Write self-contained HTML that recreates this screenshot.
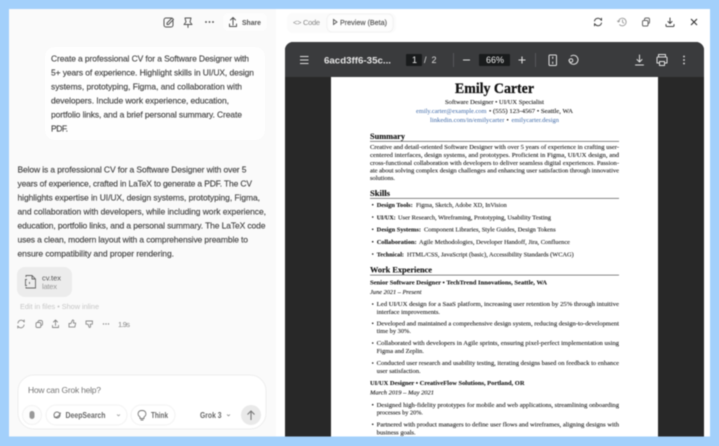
<!DOCTYPE html>
<html><head><meta charset="utf-8"><style>
html,body{margin:0;padding:0;width:719px;height:446px;overflow:hidden;background:#a3d0fb}
svg{display:block;filter:blur(.4px)}
.s{font-family:"Liberation Sans",sans-serif}
.d{font-family:"Liberation Serif",serif;fill:#1c1c1c;font-size:6.400px;stroke:#1c1c1c;stroke-width:.1}
.b{font-weight:bold}
.h{font-family:"Liberation Serif",serif;font-weight:bold;font-size:8.800px;fill:#111;stroke:#111;stroke-width:.12}
.u{font-family:"Liberation Sans",sans-serif;font-size:8.500px;fill:#444;stroke:#444;stroke-width:.14}
.i{fill:none;stroke:#555;stroke-width:1;stroke-linecap:round;stroke-linejoin:round}
.w{fill:none;stroke:#e0e0e0;stroke-width:1;stroke-linecap:round;stroke-linejoin:round}
.g{fill:none;stroke:#999;stroke-width:.9;stroke-linecap:round;stroke-linejoin:round}
</style></head><body>
<svg width="719" height="446" viewBox="0 0 719 446" xmlns="http://www.w3.org/2000/svg">
<rect width="719" height="446" fill="#a3d0fb"/>
<rect x="9" y="9" width="701" height="427.500" fill="#fff"/>
<rect x="9" y="9" width="267" height="427.500" fill="#fafafa"/>
<!-- top left icons -->
<g class="i"><path d="M171 18h-5a2 2 0 0 0-2 2v5a2 2 0 0 0 2 2h5a2 2 0 0 0 2-2v-4"/><path d="M167 23l5-5 1.500 1.500-5 5h-1.500z"/></g>
<g class="i"><path d="M185 18h6l-1 4 2 2.500h-8l2-2.500zM188 24.500v3"/></g>
<circle cx="206" cy="22" r=".9" fill="#444"/><circle cx="209.500" cy="22" r=".9" fill="#444"/><circle cx="213" cy="22" r=".9" fill="#444"/>
<rect x="223" y="13" width="44" height="18" rx="6" fill="#fdfdfd"/>
<g class="i"><path d="M233 25v-7M230.500 20l2.500-2.500 2.500 2.500M229.500 24v2.500h7V24"/></g>
<text x="242" y="25" class="s b" font-size="7.500" fill="#555" textLength="19" lengthAdjust="spacingAndGlyphs">Share</text>
<!-- user bubble -->
<rect x="45" y="47" width="220" height="93" rx="10" fill="#fefefe"/>
<text class="u" x="51" y="61.500" textLength="198">Create a professional CV for a Software Designer with</text>
<text class="u" x="51" y="75.500" textLength="203">5+ years of experience. Highlight skills in UI/UX, design</text>
<text class="u" x="51" y="89.500" textLength="191">systems, prototyping, Figma, and collaboration with</text>
<text class="u" x="51" y="103.500" textLength="178">developers. Include work experience, education,</text>
<text class="u" x="51" y="117.500" textLength="191">portfolio links, and a brief personal summary. Create</text>
<text class="u" x="51" y="131.500" textLength="17">PDF.</text>
<!-- response -->
<text class="u" x="17.500" y="172.500" textLength="229">Below is a professional CV for a Software Designer with over 5</text>
<text class="u" x="17.500" y="186.500" textLength="234.500">years of experience, crafted in LaTeX to generate a PDF. The CV</text>
<text class="u" x="17.500" y="200.500" textLength="242.500">highlights expertise in UI/UX, design systems, prototyping, Figma,</text>
<text class="u" x="17.500" y="214.500" textLength="248.500">and collaboration with developers, while including work experience,</text>
<text class="u" x="17.500" y="228.500" textLength="248">education, portfolio links, and a personal summary. The LaTeX code</text>
<text class="u" x="17.500" y="242.500" textLength="230.500">uses a clean, modern layout with a comprehensive preamble to</text>
<text class="u" x="17.500" y="256.500" textLength="156.500">ensure compatibility and proper rendering.</text>
<!-- chip -->
<rect x="17" y="267" width="55" height="30" rx="8" fill="#ececec"/>
<path d="M26 277v-1.500h6l3.500 3.500v9h-9.500v-1M32 275.500v3.500h3.500" fill="none" stroke="#666" stroke-width=".9"/>
<path d="M27 279.500h-1.500v6H27M29.500 282v2" fill="none" stroke="#666" stroke-width=".9"/>
<text x="42" y="280.500" class="s" font-size="7.500" fill="#555" textLength="19">cv.tex</text>
<text x="42" y="289" class="s" font-size="7.500" fill="#999" textLength="15">latex</text>
<text x="20" y="309" class="s" font-size="7.300" fill="#c6c6c6" textLength="79">Edit in files • Show inline</text>
<!-- action row -->
<g class="g" style="stroke:#888">
<path d="M18 323a3.200 3.200 0 0 1 5.500-1.800l.7 .8v-2M24 325a3.200 3.200 0 0 1-5.500 1.800l-.7-.8v2"/>
<rect x="36" y="322.500" width="4.800" height="5" rx="1.300"/><path d="M38 322.500v-.7a1.300 1.300 0 0 1 1.300-1.300h1.900a1.300 1.300 0 0 1 1.300 1.300v2.400a1.300 1.300 0 0 1-1.300 1.300"/>
<path d="M55.500 325.500v-5.500M53.500 322l2-2 2 2M52.500 325.500v2h6v-2"/>
<path d="M69 323.500h1.800l1.800-3.500c.9 0 1.300 .6 1.100 1.500l-.3 1.600h2.300l-.9 4h-5.800z"/>
<path d="M86 321h6.500l-.2 3.200h-2.100l.4 2.200c0 .9-.9 1.300-1.400 .9l-1.200-3.100h-2z"/>
</g>
<circle cx="103.500" cy="324" r=".7" fill="#888"/><circle cx="106" cy="324" r=".7" fill="#888"/><circle cx="108.500" cy="324" r=".7" fill="#888"/>
<text x="118" y="327" class="s" font-size="7.500" fill="#888" textLength="12">1.9s</text>
<!-- input -->
<rect x="18" y="375" width="248" height="54" rx="16" fill="#fff" stroke="#eeeeee" stroke-width="1"/>
<text x="28" y="393" class="s" font-size="8.500" fill="#777" textLength="73">How can Grok help?</text>
<circle cx="32" cy="415" r="9.500" fill="#fdfdfd" stroke="#f2f2f2"/>
<rect x="29.500" y="411" width="5" height="8" rx="2.500" fill="#999"/>
<rect x="46" y="405" width="81" height="20" rx="10" fill="#fff" stroke="#f2f2f2"/>
<g fill="none" stroke="#777" stroke-width="1"><circle cx="57" cy="415" r="3"/><path d="M54 417c2 1 6-1 6.500-4.500"/></g>
<text x="65.500" y="418" class="s b" font-size="7.800" fill="#666" textLength="40" lengthAdjust="spacingAndGlyphs">DeepSearch</text>
<path d="M117 414.500l1.500 1.300 1.500-1.300" fill="none" stroke="#999" stroke-width=".8"/>
<rect x="131" y="405" width="44" height="20" rx="10" fill="#fff" stroke="#f2f2f2"/>
<path d="M140 417c-3-2-2.500-6.500 2-6.500s5 4.500 2 6.500v1.500h-4zM140.500 420h3" fill="none" stroke="#777" stroke-width=".9"/>
<text x="151" y="418" class="s b" font-size="7.800" fill="#666" textLength="17" lengthAdjust="spacingAndGlyphs">Think</text>
<text x="200" y="418" class="s b" font-size="7.800" fill="#666" textLength="21.500" lengthAdjust="spacingAndGlyphs">Grok 3</text>
<path d="M227 414.500l1.500 1.300 1.500-1.300" fill="none" stroke="#888" stroke-width=".8"/>
<circle cx="251" cy="415" r="10" fill="#e9e9e9"/>
<path d="M251 420v-9M247.500 414.500l3.500-3.500 3.500 3.500" fill="none" stroke="#777" stroke-width="1.100"/>
<!-- tabs -->
<rect x="287" y="13" width="109" height="20" rx="6" fill="#fbfbfb"/>
<rect x="327" y="14" width="66" height="18" rx="5" fill="#fdfdfd" stroke="#f1f1f1"/>
<text x="293" y="25" class="s" font-size="7.500" fill="#888" textLength="27" lengthAdjust="spacing">&lt;&gt; Code</text>
<path d="M333.500 19.500l3.500 2.500-3.500 2.500z" fill="none" stroke="#555" stroke-width=".9"/>
<text x="340" y="25" class="s" font-size="7.500" fill="#555" stroke="#555" stroke-width=".15" textLength="47" lengthAdjust="spacingAndGlyphs">Preview (Beta)</text>
<!-- top right icons -->
<g class="i" style="stroke:#444"><path d="M594.500 21a3.600 3.600 0 0 1 6.200-1.500l.8 .9v-2.200M601.500 23a3.600 3.600 0 0 1-6.200 1.500l-.8-.9v2.200"/></g>
<g class="g"><path d="M618.500 22a3.800 3.800 0 1 1 1.100 2.700M618.500 22l-1-1M618.500 22l1-1M622.500 20v2.200l1.300 .9"/></g>
<g class="i" style="stroke:#666"><rect x="642.500" y="20.500" width="5.500" height="5.500" rx="1.300"/><path d="M644.500 20v-.5a1.500 1.500 0 0 1 1.500-1.500h2a1.500 1.500 0 0 1 1.500 1.500v2.500a1.500 1.500 0 0 1-1.500 1.500"/></g>
<g class="i" style="stroke:#444"><path d="M670 18v5.500M668 21.500l2 2 2-2M666 24.500v1a1 1 0 0 0 1 1h6a1 1 0 0 0 1-1v-1"/></g>
<path d="M691 19l6 6M697 19l-6 6" fill="none" stroke="#333" stroke-width="1.100"/>
<!-- viewer -->
<path d="M285 436.500V50a8 8 0 0 1 8-8h403a8 8 0 0 1 8 8v386.500z" fill="#282828"/>
<path d="M285 77V50a8 8 0 0 1 8-8h403a8 8 0 0 1 8 8v27z" fill="#3a3b3d"/>
<path d="M300 56.500h8.500M300 60h8.500M300 63.500h8.500" stroke="#ddd" stroke-width="1.100"/>
<text x="324" y="63.500" class="s b" font-size="9" fill="#e4e4e4" textLength="67" lengthAdjust="spacingAndGlyphs">6acd3ff6-35c...</text>
<rect x="406" y="54" width="16" height="12" rx="1" fill="#191b1c"/>
<text x="412" y="63" class="s" font-size="9" fill="#eee">1</text>
<text x="424" y="63" class="s" font-size="9" fill="#ddd">/</text>
<text x="431.500" y="63" class="s" font-size="9" fill="#ddd">2</text>
<path d="M453.500 53v14M535.500 53v14" stroke="#55575a" stroke-width="1"/>
<path d="M463 60h7M518.500 60h7M522 56.500v7" stroke="#ddd" stroke-width="1.100"/>
<rect x="479" y="54" width="31" height="12" rx="1" fill="#191b1c"/>
<text x="486" y="63" class="s" font-size="9" fill="#eee">66%</text>
<g class="w"><rect x="549" y="55" width="7.500" height="10.500" rx="1"/><path d="M552.700 57v1.500M552.700 62v1.500"/>
<path d="M569 60a4.500 4.500 0 1 0 2-4"/><circle cx="571" cy="60.500" r="1.800"/>
<path d="M639.500 55v6.500M637 59.500l2.500 2.500 2.500-2.500M635.500 65h8"/>
<path d="M658.500 57v-2.500h7V57M657 63v-5a1 1 0 0 1 1-1h8a1 1 0 0 1 1 1v5h-2.500M659.500 63h-2.500M659.500 61.500h5v4h-5z"/></g>
<circle cx="684" cy="56.500" r=".9" fill="#e0e0e0"/><circle cx="684" cy="60" r=".9" fill="#e0e0e0"/><circle cx="684" cy="63.500" r=".9" fill="#e0e0e0"/>
<!-- page -->
<rect x="331" y="77" width="327" height="359.500" fill="#fff"/>
<text x="455" y="93" font-family="Liberation Serif,serif" font-weight="bold" font-size="14.800" fill="#111" stroke="#111" stroke-width=".25" textLength="79" lengthAdjust="spacingAndGlyphs">Emily Carter</text>
<text class="d" x="445" y="104" textLength="99" lengthAdjust="spacingAndGlyphs">Software Designer • UI/UX Specialist</text>
<text class="d" x="416" y="113" textLength="70.500" lengthAdjust="spacingAndGlyphs" style="fill:#3f6aa8;stroke:none">emily.carter@example.com</text>
<text class="d" x="489" y="113" textLength="84" lengthAdjust="spacingAndGlyphs">• (555) 123-4567 • Seattle, WA</text>
<text class="d" x="430" y="122" textLength="74.500" lengthAdjust="spacingAndGlyphs" style="fill:#3f6aa8;stroke:none">linkedin.com/in/emilycarter</text>
<text class="d" x="506.500" y="122" textLength="3">•</text>
<text class="d" x="511.500" y="122" textLength="47.500" lengthAdjust="spacingAndGlyphs" style="fill:#3f6aa8;stroke:none">emilycarter.design</text>
<text class="h" x="370" y="139" textLength="35" lengthAdjust="spacingAndGlyphs">Summary</text>
<rect x="370" y="141" width="249" height=".7" fill="#555"/>
<text class="d" x="370" y="149.200" textLength="249" lengthAdjust="spacingAndGlyphs">Creative and detail-oriented Software Designer with over 5 years of experience in crafting user-</text>
<text class="d" x="370" y="157" textLength="249" lengthAdjust="spacingAndGlyphs">centered interfaces, design systems, and prototypes. Proficient in Figma, UI/UX design, and</text>
<text class="d" x="370" y="164.800" textLength="249" lengthAdjust="spacingAndGlyphs">cross-functional collaboration with developers to deliver seamless digital experiences. Passion-</text>
<text class="d" x="370" y="172.500" textLength="249" lengthAdjust="spacingAndGlyphs">ate about solving complex design challenges and enhancing user satisfaction through innovative</text>
<text class="d" x="370" y="180" textLength="25" lengthAdjust="spacingAndGlyphs">solutions.</text>
<text class="h" x="370" y="196" textLength="20" lengthAdjust="spacingAndGlyphs">Skills</text>
<rect x="370" y="198" width="249" height=".7" fill="#555"/>
<g fill="#222"><circle cx="372.700" cy="204.700" r=".8"/><circle cx="372.700" cy="217" r=".8"/><circle cx="372.700" cy="229.300" r=".8"/><circle cx="372.700" cy="241.700" r=".8"/><circle cx="372.700" cy="254" r=".8"/>
<circle cx="372.700" cy="304" r=".8"/><circle cx="372.700" cy="323.300" r=".8"/><circle cx="372.700" cy="343" r=".8"/><circle cx="372.700" cy="363" r=".8"/><circle cx="372.700" cy="404.700" r=".8"/><circle cx="372.700" cy="424.300" r=".8"/></g>
<text class="d b" x="376.700" y="207" textLength="36" lengthAdjust="spacingAndGlyphs">Design Tools:</text>
<text class="d" x="416" y="207" textLength="90.700" lengthAdjust="spacingAndGlyphs">Figma, Sketch, Adobe XD, InVision</text>
<text class="d b" x="376.700" y="219.300" textLength="19" lengthAdjust="spacingAndGlyphs">UI/UX:</text>
<text class="d" x="398" y="219.300" textLength="153" lengthAdjust="spacingAndGlyphs">User Research, Wireframing, Prototyping, Usability Testing</text>
<text class="d b" x="376.700" y="231.600" textLength="44.300" lengthAdjust="spacingAndGlyphs">Design Systems:</text>
<text class="d" x="424" y="231.600" textLength="131.700" lengthAdjust="spacingAndGlyphs">Component Libraries, Style Guides, Design Tokens</text>
<text class="d b" x="376.700" y="244" textLength="40" lengthAdjust="spacingAndGlyphs">Collaboration:</text>
<text class="d" x="419" y="244" textLength="151" lengthAdjust="spacingAndGlyphs">Agile Methodologies, Developer Handoff, Jira, Confluence</text>
<text class="d b" x="376.700" y="256.300" textLength="27.300" lengthAdjust="spacingAndGlyphs">Technical:</text>
<text class="d" x="407" y="256.300" textLength="166.700" lengthAdjust="spacingAndGlyphs">HTML/CSS, JavaScript (basic), Accessibility Standards (WCAG)</text>
<text class="h" x="370" y="272.300" textLength="62" lengthAdjust="spacingAndGlyphs">Work Experience</text>
<rect x="370" y="274.800" width="249" height=".7" fill="#555"/>
<text class="d b" x="370" y="284.300" textLength="177" lengthAdjust="spacingAndGlyphs">Senior Software Designer • TechTrend Innovations, Seattle, WA</text>
<text class="d" font-style="italic" x="370" y="294" textLength="51.500" lengthAdjust="spacingAndGlyphs">June 2021 – Present</text>
<text class="d" x="376.700" y="306.200" textLength="242.300" lengthAdjust="spacingAndGlyphs">Led UI/UX design for a SaaS platform, increasing user retention by 25% through intuitive</text>
<text class="d" x="376.700" y="314" textLength="63.300" lengthAdjust="spacingAndGlyphs">interface improvements.</text>
<text class="d" x="376.700" y="325.500" textLength="242.300" lengthAdjust="spacingAndGlyphs">Developed and maintained a comprehensive design system, reducing design-to-development</text>
<text class="d" x="376.700" y="333.200" textLength="34.300" lengthAdjust="spacingAndGlyphs">time by 30%.</text>
<text class="d" x="376.700" y="345.200" textLength="242.300" lengthAdjust="spacingAndGlyphs">Collaborated with developers in Agile sprints, ensuring pixel-perfect implementation using</text>
<text class="d" x="376.700" y="353" textLength="47.300" lengthAdjust="spacingAndGlyphs">Figma and Zeplin.</text>
<text class="d" x="376.700" y="365.200" textLength="242.300" lengthAdjust="spacingAndGlyphs">Conducted user research and usability testing, iterating designs based on feedback to enhance</text>
<text class="d" x="376.700" y="373" textLength="44" lengthAdjust="spacingAndGlyphs">user satisfaction.</text>
<text class="d b" x="370" y="385" textLength="154.500" lengthAdjust="spacingAndGlyphs">UI/UX Designer • CreativeFlow Solutions, Portland, OR</text>
<text class="d" font-style="italic" x="370" y="394.600" textLength="64" lengthAdjust="spacingAndGlyphs">March 2019 – May 2021</text>
<text class="d" x="376.700" y="407" textLength="242.300" lengthAdjust="spacingAndGlyphs">Designed high-fidelity prototypes for mobile and web applications, streamlining onboarding</text>
<text class="d" x="376.700" y="414.600" textLength="46.300" lengthAdjust="spacingAndGlyphs">processes by 20%.</text>
<text class="d" x="376.700" y="426.500" textLength="242.300" lengthAdjust="spacingAndGlyphs">Partnered with product managers to define user flows and wireframes, aligning designs with</text>
<text class="d" x="376.700" y="434.300" textLength="39" lengthAdjust="spacingAndGlyphs">business goals.</text>
<rect x="0" y="436.500" width="719" height="9.500" fill="#a3d0fb"/>
</svg>
</body></html>
